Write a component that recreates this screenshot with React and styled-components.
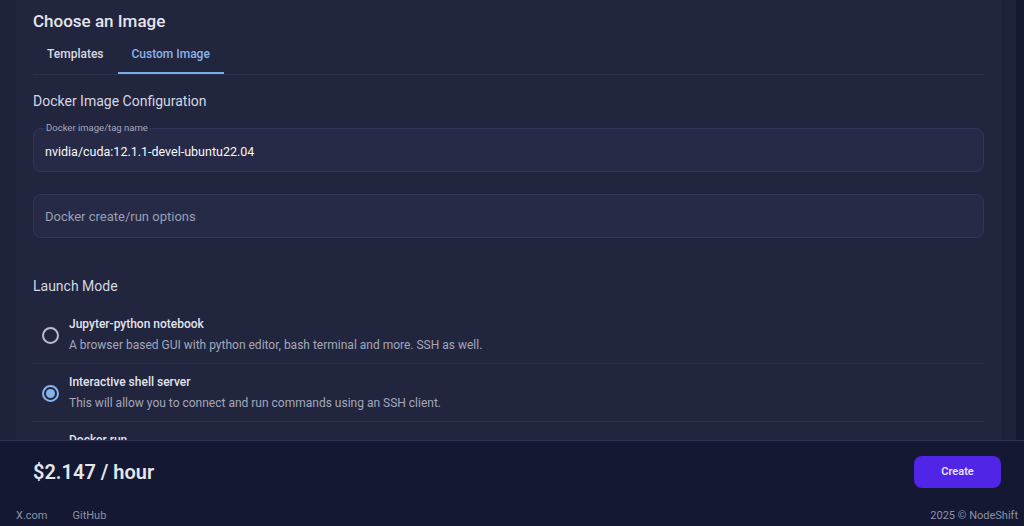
import React, { useState } from 'react';
import styled, { createGlobalStyle } from 'styled-components';

const GlobalStyle = createGlobalStyle`
  html, body {
    margin: 0;
    padding: 0;
    background: #141833;
    font-family: Roboto, "Noto Sans", "Liberation Sans", sans-serif;
    -webkit-font-smoothing: antialiased;
  }
  * { box-sizing: border-box; }
`;

const modes = [
  {
    id: 'jupyter',
    title: 'Jupyter-python notebook',
    desc: 'A browser based GUI with python editor, bash terminal and more. SSH as well.',
  },
  {
    id: 'shell',
    title: 'Interactive shell server',
    desc: 'This will allow you to connect and run commands using an SSH client.',
  },
  {
    id: 'docker',
    title: 'Docker run',
    desc: 'Run the container with your own entrypoint and command.',
  },
];

const App = () => {
  const [tab, setTab] = useState('custom');
  const [mode, setMode] = useState('shell');

  return (
    <>
      <GlobalStyle />
      <StyledPage>
        <StyledMain>
          <StyledPane>
            <StyledCard>
              <StyledTitle>Choose an Image</StyledTitle>
              <StyledTabs>
                <StyledTab active={tab === 'templates'} onClick={() => setTab('templates')}>
                  Templates
                </StyledTab>
                <StyledTab active={tab === 'custom'} onClick={() => setTab('custom')}>
                  Custom Image
                </StyledTab>
              </StyledTabs>

              <StyledSection>Docker Image Configuration</StyledSection>
              <StyledField>
                <legend>Docker image/tag name</legend>
                <input defaultValue="nvidia/cuda:12.1.1-devel-ubuntu22.04" />
              </StyledField>
              <StyledField plain>
                <input placeholder="Docker create/run options" />
              </StyledField>

              <StyledSection top={39}>Launch Mode</StyledSection>
              <StyledModes>
                {modes.map((m) => (
                  <StyledMode key={m.id} onClick={() => setMode(m.id)}>
                    <StyledRadio checked={mode === m.id} />
                    <div>
                      <h5>{m.title}</h5>
                      <p>{m.desc}</p>
                    </div>
                  </StyledMode>
                ))}
              </StyledModes>
            </StyledCard>
          </StyledPane>
          <StyledTrack />
        </StyledMain>

        <StyledFooter>
          <StyledPriceBar>
            <StyledPrice>$2.147 / hour</StyledPrice>
            <StyledButton>Create</StyledButton>
          </StyledPriceBar>
          <StyledLinks>
            <div>
              <a>X.com</a>
              <a>GitHub</a>
            </div>
            <span>2025 © NodeShift</span>
          </StyledLinks>
        </StyledFooter>
      </StyledPage>
    </>
  );
};

const StyledPage = styled.div`
  height: 526px;
  display: flex;
  flex-direction: column;
  overflow: hidden;
`;

const StyledMain = styled.div`
  height: 440px;
  flex: none;
  display: flex;
  overflow: hidden;
`;

const StyledPane = styled.div`
  flex: 1;
  background: #1d2139;
  padding: 0 14px 0 16px;
  overflow: hidden;
`;

const StyledTrack = styled.div`
  width: 8px;
  background: #141833;
`;

const StyledCard = styled.div`
  background: #21253e;
  padding: 10px 18px 40px 17px;
  min-height: 100%;
`;

const StyledTitle = styled.h2`
  margin: 0;
  font-size: 17px;
  line-height: 22px;
  font-weight: 500;
  color: #e4e6ee;
`;

const StyledTabs = styled.div`
  display: flex;
  margin-top: 4px;
  border-bottom: 1px solid #2c3150;
`;

const StyledTab = styled.button`
  height: 38px;
  padding: 0 14px;
  border: none;
  background: none;
  font-family: inherit;
  font-size: 12px;
  font-weight: 500;
  color: ${(p) => (p.active ? '#8ab6ea' : '#d9dbe4')};
  border-bottom: 2px solid ${(p) => (p.active ? '#79ade6' : 'transparent')};
  cursor: pointer;
`;

const StyledSection = styled.h3`
  margin: ${(p) => (p.top || 17)}px 0 0;
  font-size: 14px;
  line-height: 18px;
  font-weight: 400;
  color: #d4d7e0;
`;

const StyledField = styled.fieldset`
  margin: ${(p) => (p.plain ? '22px' : '13px')} 0 0;
  padding: 0 11px;
  height: ${(p) => (p.plain ? '44px' : '49px')};
  border: 1px solid #30355a;
  border-radius: 8px;
  background: #262a46;
  display: flex;
  align-items: center;

  legend {
    margin-left: -1px;
    padding: 0 2px;
    font-size: 9.5px;
    line-height: 10px;
    color: #a3a7ba;
  }

  input {
    width: 100%;
    border: none;
    background: none;
    outline: none;
    font-family: inherit;
    font-size: ${(p) => (p.plain ? '13px' : '12.5px')};
    font-weight: 400;
    color: ${(p) => (p.plain ? '#f0f1f6' : '#f6f7fb')};
    margin-top: ${(p) => (p.plain ? '1px' : '-2px')};
    padding: 0;
  }

  input::placeholder {
    color: #9a9eb3;
  }
`;

const StyledModes = styled.div`
  margin-top: 11px;
`;

const StyledMode = styled.div`
  display: flex;
  align-items: center;
  gap: 10px;
  padding: 0 0 0 9px;
  height: 58px;
  border-bottom: 1px solid #2b3050;
  cursor: pointer;

  h5 {
    margin: 0;
    font-size: 12px;
    line-height: 16px;
    font-weight: 500;
    color: #e2e4ec;
  }

  p {
    margin: 5px 0 0;
    font-size: 12px;
    line-height: 16px;
    color: #a4a8ba;
  }
`;

const StyledRadio = styled.span`
  width: 17px;
  height: 17px;
  flex: none;
  margin-top: 2px;
  border-radius: 50%;
  border: 2px solid ${(p) => (p.checked ? '#86b3ea' : '#b9bcc9')};
  display: flex;
  align-items: center;
  justify-content: center;

  &::after {
    content: '';
    width: 9px;
    height: 9px;
    border-radius: 50%;
    background: ${(p) => (p.checked ? '#86b3ea' : 'transparent')};
  }
`;

const StyledFooter = styled.footer`
  flex: 1;
  background: #141833;
  border-top: 1px solid #2e3352;
`;

const StyledPriceBar = styled.div`
  height: 61px;
  display: flex;
  align-items: center;
  justify-content: space-between;
  padding: 0 23px 0 33px;
`;

const StyledPrice = styled.div`
  font-size: 20px;
  font-weight: 600;
  color: #e4e6ee;
`;

const StyledButton = styled.button`
  width: 87px;
  height: 32px;
  border: none;
  border-radius: 8px;
  background: #5025e8;
  font-family: inherit;
  font-size: 11px;
  font-weight: 600;
  color: #e4e2ff;
  cursor: pointer;
`;

const StyledLinks = styled.div`
  display: flex;
  justify-content: space-between;
  align-items: center;
  padding: 7px 6px 0 16px;
  font-size: 11px;
  color: #8c91aa;

  div {
    display: flex;
    gap: 25px;
  }

  span {
    color: #8c91aa;
  }
`;

export default App;
